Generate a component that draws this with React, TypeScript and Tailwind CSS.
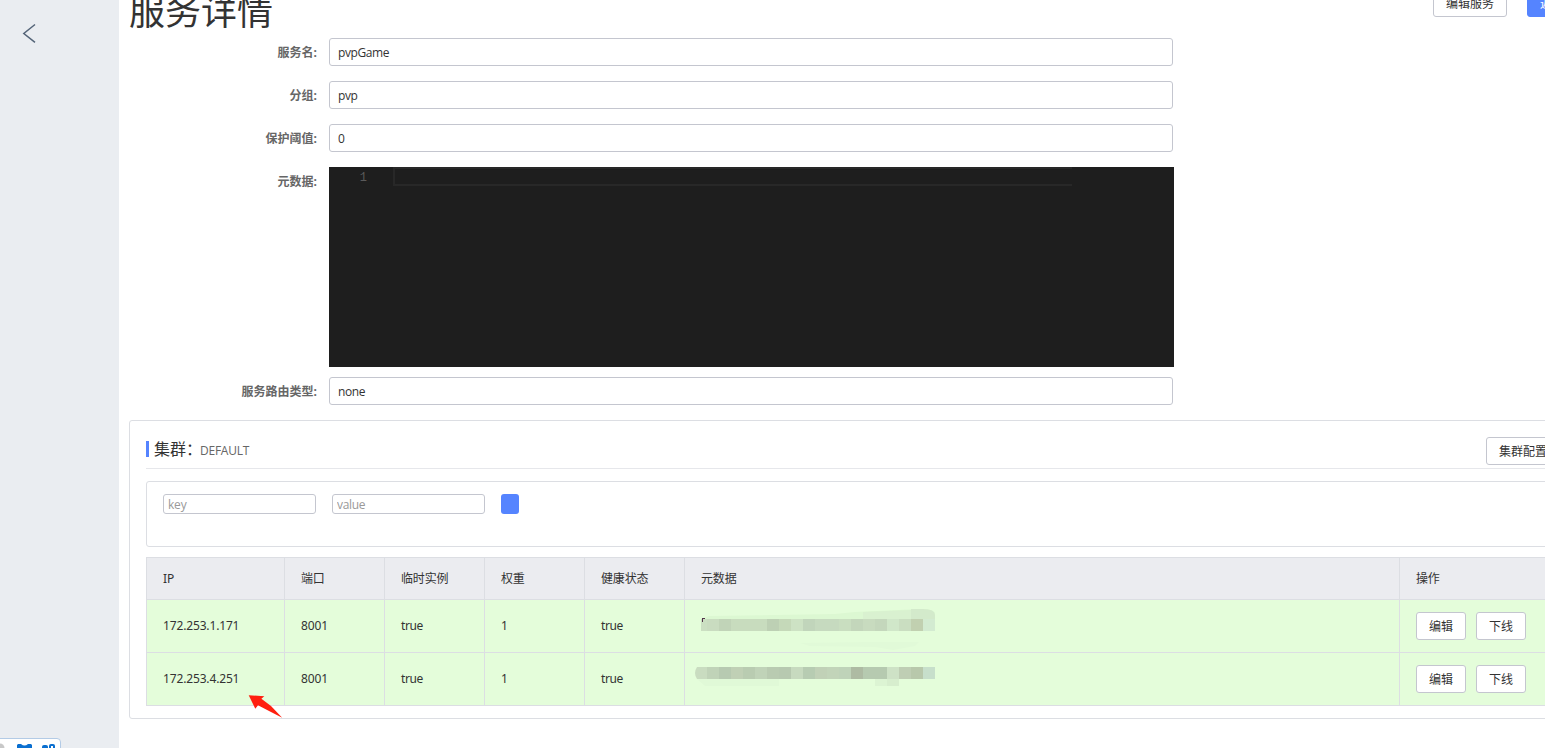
/**
 * Service detail page
 *
 * Service form, cluster card and instance table
 */

import React, { useState } from 'react';

interface Instance {
  ip: string;
  port: number;
  ephemeral: boolean;
  weight: number;
  healthy: boolean;
}

interface Field {
  label: string;
  value: string;
}

const fields: Field[] = [
  { label: '服务名:', value: 'pvpGame' },
  { label: '分组:', value: 'pvp' },
  { label: '保护阈值:', value: '0' },
];

const instances: Instance[] = [
  { ip: '172.253.1.171', port: 8001, ephemeral: true, weight: 1, healthy: true },
  { ip: '172.253.4.251', port: 8001, ephemeral: true, weight: 1, healthy: true },
];

const columns = ['IP', '端口', '临时实例', '权重', '健康状态', '元数据', '操作'];

// Redacted metadata, one colour per 12px block
const maskA = [
  '#c9dcc0', '#c1d4b8', '#c8dcbe', '#c8dcbe', '#c8dcbe', '#bdd0b4', '#c5d9b9', '#cde2c4', '#c1d5bb', '#c6dabf',
  '#c6dabf', '#c9dec0', '#c3d6bb', '#c8dbbf', '#c4d7bc', '#d0e7c9', '#cadec1', '#c1d0b0', '#d3ebd1',
];
const maskB = [
  '#c0d3b8', '#b7cab1', '#c0d0b5', '#b9ccb1', '#c0d3b8', '#b9cbb1', '#b7c9b0', '#c7dabf', '#b7ccb2', '#c1d1b7',
  '#c2d4b9', '#bfd3b9', '#aebba3', '#b6cab0', '#b6cab0', '#cee2c6', '#bfceb4', '#b8c8ab', '#c7dfcb',
];

const Input: React.FC<{ value: string }> = ({ value }) => (
  <input
    readOnly
    value={value}
    className="h-7 w-[844px] rounded-[3px] border border-[#c4c6cf] bg-white px-2 tracking-[-0.4px] text-[#333] outline-none"
  />
);

const Button: React.FC<{ children: React.ReactNode; primary?: boolean }> = ({ children, primary }) => (
  <button
    className={
      primary
        ? 'h-7 shrink-0 whitespace-nowrap rounded-[3px] border border-[#5584ff] bg-[#5584ff] px-3 pt-0.5 text-white'
        : 'h-7 shrink-0 whitespace-nowrap rounded-[3px] border border-[#c4c6cf] bg-white px-3 pt-0.5 text-[#333]'
    }
  >
    {children}
  </button>
);

const Label: React.FC<{ text: string }> = ({ text }) => (
  <label className="w-[188px] shrink-0 pt-1.5 text-right font-bold leading-[18px] text-[#666]">{text}</label>
);

const MaskedMetadata: React.FC<{ index: number }> = ({ index }) =>
  index === 0 ? (
    <svg className="absolute left-0 top-0" width="270" height="52">
      <path d="M16 19 L24 16 L90 15 L150 14 L170 12 L235 9 Q250 9 250 14 V19Z" fill="#dcf8d2" />
      <path d="M178 19 V12 L226 10 V19Z" fill="#d9f1d0" />
      <path d="M226 19 V9 L238 9 Q250 9 250 15 V19Z" fill="#d3eacb" />
      <path d="M115 43 L185 42 H234 L230 46 L208 50 L190 47 L125 46Z" fill="#e1fad8" />
      <path d="M22 19 V31 H16 L16 19Z" fill="#cbdfc2" />
      {maskA.map((c, i) => (
        <rect key={i} x={22 + i * 12} y="19" width="12" height="12" fill={c} />
      ))}
      <path d="M17 18 H20 V19 H18 V22 H17Z" fill="#52364a" />
    </svg>
  ) : (
    <svg className="absolute left-0 top-0" width="270" height="52">
      <path d="M12 26 H94 V33 H20Z" fill="#e0f9d7" />
      <path d="M190 26 H214 V33 H190Z" fill="#dcf4d3" />
      <path d="M202 26 H214 V33 H202Z" fill="#d7eece" />
      <path d="M22 14 V26 H12 Q8 20 12 14Z" fill="#c9dcc0" />
      {maskB.map((c, i) => (
        <rect key={i} x={22 + i * 12} y="14" width="12" height="12" fill={c} />
      ))}
    </svg>
  );

const InstanceTable: React.FC = () => (
  <table className="w-[1453px] table-fixed border-separate border-spacing-0 border-l border-t border-[#dcdee3] text-left font-['Noto_Sans','Noto_Sans_CJK_SC',sans-serif] tracking-[-0.15px]">
    <colgroup>
      <col className="w-[138px]" />
      <col className="w-[100px]" />
      <col className="w-[100px]" />
      <col className="w-[100px]" />
      <col className="w-[100px]" />
      <col className="w-[715px]" />
      <col className="w-[199px]" />
    </colgroup>
    <thead>
      <tr className="h-[42px] bg-[#ebecf0]">
        {columns.map((name) => (
          <th key={name} className="border-b border-r border-[#dcdee3] px-4 py-0 font-normal">
            {name}
          </th>
        ))}
      </tr>
    </thead>
    <tbody>
      {instances.map((item, index) => (
        <tr key={item.ip} className="h-[53px] bg-[#e4fdda]">
          <td className="border-b border-r border-[#dcdee3] px-4 py-0">{item.ip}</td>
          <td className="border-b border-r border-[#dcdee3] px-4 py-0">{item.port}</td>
          <td className="border-b border-r border-[#dcdee3] px-4 py-0 tracking-[-0.4px]">{String(item.ephemeral)}</td>
          <td className="border-b border-r border-[#dcdee3] px-4 py-0">{item.weight}</td>
          <td className="border-b border-r border-[#dcdee3] px-4 py-0 tracking-[-0.4px]">{String(item.healthy)}</td>
          <td className="relative border-b border-r border-[#dcdee3] p-0">
            <MaskedMetadata index={index} />
          </td>
          <td className="border-b border-r border-[#dcdee3] px-4 py-0">
            <div className="flex gap-2.5 tracking-normal">
              <Button>编辑</Button>
              <Button>下线</Button>
            </div>
          </td>
        </tr>
      ))}
    </tbody>
  </table>
);

const ClusterCard: React.FC = () => {
  const [key, setKey] = useState('');
  const [value, setValue] = useState('');

  return (
    <section className="h-[299px] w-[1487px] rounded-[3px] border border-[#dcdee3] px-4 pt-4">
      <div className="flex h-8 items-start border-b border-[#e6e7eb]">
        <div className="mt-1 flex h-4 items-center border-l-[3px] border-[#5584ff] pl-[5px]">
          <span className="text-base text-[#333]">集群：</span>
          <span className="-ml-[2px] mt-1 tracking-[-0.25px] text-[#666]">DEFAULT</span>
        </div>
        <div className="ml-auto w-[113px]">
          <Button>集群配置</Button>
        </div>
      </div>

      <div className="mt-3 flex h-[66px] items-start gap-4 rounded-[3px] border border-[#dcdee3] px-4 pt-3">
        <input
          placeholder="key"
          value={key}
          onChange={(e) => setKey(e.target.value)}
          className="h-5 w-[153px] rounded-[3px] border border-[#c4c6cf] px-1 tracking-[-0.2px] outline-none placeholder:text-[#999]"
        />
        <input
          placeholder="value"
          value={value}
          onChange={(e) => setValue(e.target.value)}
          className="h-5 w-[153px] rounded-[3px] border border-[#c4c6cf] px-1 tracking-[-0.3px] outline-none placeholder:text-[#999]"
        />
        <button className="h-5 w-[18px] rounded-[3px] bg-[#5584ff]" />
      </div>

      <div className="mt-2.5">
        <InstanceTable />
      </div>
    </section>
  );
};

export default function App() {
  return (
    <div className="relative flex h-[748px] w-full overflow-hidden bg-white font-['Open_Sans','Noto_Sans_CJK_SC',sans-serif] text-xs text-[#333]">
      <aside className="w-[119px] shrink-0 bg-[#eaedf1] pl-[22px] pt-[23px]">
        <svg width="15" height="21" viewBox="0 0 15 21" fill="none" stroke="#546478" strokeWidth="1.5">
          <path d="M13 1.5 L1.8 10.5 L13 19.3" />
        </svg>
      </aside>

      <main className="min-w-0 flex-1 overflow-hidden pl-2.5">
        <header className="flex h-[38px] items-start">
          <h1 className="-mt-[17px] w-[1304px] shrink-0 font-['Noto_Sans_CJK_SC',sans-serif] text-4xl font-normal leading-[52px]">
            服务详情
          </h1>
          <div className="-mt-[11px] flex gap-5">
            <Button>编辑服务</Button>
            <Button primary>返回</Button>
          </div>
        </header>

        <div className="flex flex-col">
          {fields.map((field) => (
            <div key={field.label} className="mb-[15px] flex gap-3">
              <Label text={field.label} />
              <Input value={field.value} />
            </div>
          ))}

          {/* Metadata editor */}
          <div className="mb-2.5 flex gap-3">
            <Label text="元数据:" />
            <div className="flex h-[200px] w-[845px] bg-[#1e1e1e]">
              <span className="w-[38px] pt-0.5 text-right font-['Liberation_Mono',monospace] text-xs leading-[18px] text-[#5a5a5a]">
                1
              </span>
              <div className="ml-[26px] h-[19px] w-[679px] border-2 border-r-0 border-[#282828]" />
            </div>
          </div>

          <div className="mb-[15px] flex gap-3">
            <Label text="服务路由类型:" />
            <Input value="none" />
          </div>
        </div>

        <ClusterCard />
      </main>

      {/* Pointer over the second instance */}
      <svg className="absolute left-[248px] top-[694px]" width="36" height="26" viewBox="0 0 36 26">
        <path d="M0.7 1.2 L16.3 2.3 L13.4 4.8 L23 12 L34.2 23.7 L22 17.5 L10 11.2 L7.3 14.8 Z" fill="#ff1f0f" />
      </svg>

      {/* Floating input bar */}
      <div className="absolute -left-1 top-[738px] h-5 w-[65px] rounded-tr-sm border border-[#b3cbe6] bg-white">
        <svg width="63" height="10" viewBox="0 0 63 10">
          <circle cx="3" cy="9" r="4.5" fill="#c8c8c8" />
          <path d="M20 6 L21 5 H24 Q27.5 8 31 5 H34 L35 6 V10 H20Z" fill="#0a6fd0" />
          <rect x="45" y="6" width="6" height="6" rx="2" fill="#0a6fd0" />
          <rect x="52" y="5" width="6" height="7" rx="2" fill="#0a6fd0" />
          <rect x="54" y="7" width="2" height="2" fill="#fff" />
        </svg>
      </div>
    </div>
  );
}
